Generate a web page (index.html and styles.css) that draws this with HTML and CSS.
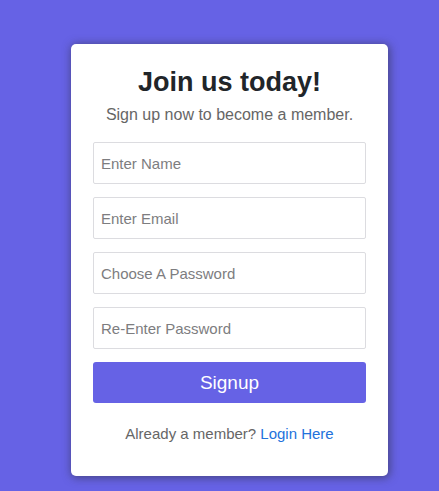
FILE: index.html
```html
<!DOCTYPE html>
<html lang="en">
<head>
<meta charset="utf-8">
<meta name="viewport" content="width=device-width, initial-scale=1">
<title>Sign up</title>
<link rel="stylesheet" href="styles.css">
</head>
<body>
<main class="card">
  <h1 class="title">Join us today!</h1>
  <p class="subtitle">Sign up now to become a member.</p>
  <form class="form">
    <input class="field" type="text" placeholder="Enter Name" aria-label="Enter Name">
    <input class="field" type="email" placeholder="Enter Email" aria-label="Enter Email">
    <input class="field" type="password" placeholder="Choose A Password" aria-label="Choose A Password">
    <input class="field" type="password" placeholder="Re-Enter Password" aria-label="Re-Enter Password">
    <button class="submit" type="submit">Signup</button>
  </form>
  <p class="login">Already a member? <a class="link" href="#">Login Here</a></p>
</main>
</body>
</html>
```
FILE: styles.css
```css
* {
  box-sizing: border-box;
}

body {
  margin: 0;
  padding: 44px 51px 15px 71px;
  background: #6662e5;
  font-family: "Liberation Sans", Arial, sans-serif;
  color: #666;
}

.card {
  max-width: 480px;
  margin: 0 auto;
  padding: 22px 22px 32px;
  background: #fff;
  border-radius: 5px;
  box-shadow: 1px 1px 8px 1px rgba(50, 50, 70, 0.6);
  text-align: center;
}

.title {
  margin: 0;
  font-size: 27px;
  line-height: 32px;
  color: #212529;
}

.subtitle {
  margin: 5px 0 15px;
  font-size: 16px;
  line-height: 24px;
}

.form {
  display: flex;
  flex-direction: column;
  gap: 13px;
}

.field {
  width: 100%;
  height: 42px;
  padding: 0 7px;
  border: 1px solid #dcdce0;
  border-radius: 2px;
  background: #fff;
  font: inherit;
  font-size: 15px;
  color: #333;
}

.field::placeholder {
  color: #7d7d80;
  opacity: 1;
}

.submit {
  height: 41px;
  padding: 0;
  border: 0;
  border-radius: 3px;
  background: #6662e5;
  font: inherit;
  font-size: 19px;
  color: #fff;
}

.login {
  margin: 21px 0 0;
  font-size: 15px;
  line-height: 20px;
}

.link {
  color: #2272dc;
  text-decoration: none;
}
```
